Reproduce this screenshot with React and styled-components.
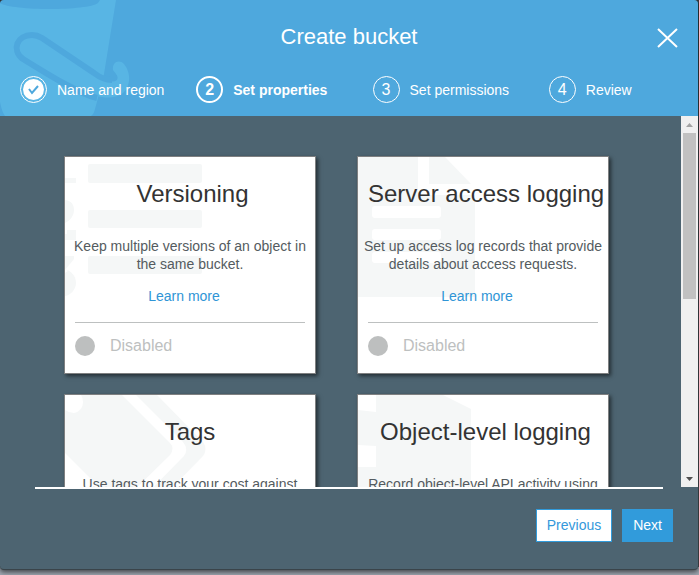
import React, { useRef, useState, useEffect } from "react";
import styled, { createGlobalStyle, css } from "styled-components";

const GlobalStyle = createGlobalStyle`
  * { box-sizing: border-box; }
  body {
    margin: 0;
    background: #9ea6b0;
    color: #333;
    font-family: "Liberation Sans", Arial, Helvetica, sans-serif;
    font-size: 14px;
    line-height: 18px;
  }
`;

const Backdrop = styled.div`
  height: 100vh;
  padding: 0 1px 5px 0;
  background: linear-gradient(#33393f, #4b4f53) no-repeat 0 0 / 100% calc(100% - 8px);
`;

const Dialog = styled.section`
  display: flex;
  flex-direction: column;
  height: 100%;
  overflow: hidden;
  border-radius: 4px;
  border-bottom: 1px solid #3a444a;
  background: #4d6471;
  box-shadow: 0 2px 5px rgba(0, 0, 0, 0.6);
`;

const Header = styled.header`
  position: relative;
  flex: none;
  display: flex;
  flex-direction: column;
  height: 116px;
  background: #4ea8dd;
  color: #fff;
`;

const BucketArt = styled.svg`
  position: absolute;
  left: 0;
  top: 0;
`;

const TitleBar = styled.div`
  position: relative;
  display: grid;
  grid-template-columns: 1fr auto 1fr;
  align-items: center;
  padding: 24px 20px 0 20px;
`;

const Title = styled.h1`
  grid-column: 2;
  margin: 0;
  font-size: 22px;
  line-height: 26px;
  font-weight: 400;
`;

const CloseButton = styled.button`
  justify-self: end;
  display: flex;
  padding: 0;
  border: 0;
  background: none;
  color: #fff;
  cursor: pointer;
`;

const Steps = styled.ol`
  position: relative;
  display: grid;
  grid-template-columns: repeat(3, minmax(0, 176fr)) minmax(0, 149fr);
  margin: 0;
  padding: 26px 0 0 20px;
  list-style: none;
`;

const Step = styled.li`
  display: flex;
  align-items: center;
  gap: 10px;
  white-space: nowrap;
  font-weight: ${(p) => (p.$current ? 700 : 400)};
`;

const StepBadge = styled.span`
  display: flex;
  align-items: center;
  justify-content: center;
  width: 27px;
  height: 27px;
  border: ${(p) => (p.$current ? 2 : 1)}px solid #fff;
  border-radius: 50%;
  font-size: 16px;
`;

const ScrollRow = styled.div`
  flex: 1;
  display: flex;
  min-height: 0;
`;

const ScrollArea = styled.div`
  flex: 1;
  min-width: 0;
  overflow-y: auto;
  scrollbar-width: none;
`;

const CardGrid = styled.div`
  display: grid;
  grid-template-columns: repeat(2, 252px);
  justify-content: center;
  gap: 20px 41px;
  padding: 40px 8px 40px 0;
`;

const Card = styled.article`
  position: relative;
  height: 218px;
  padding: 23px 5px 0;
  border: 1px solid #7f8081;
  background: #fff;
  box-shadow: 2px 2px 4px rgba(0, 0, 0, 0.55);
  text-align: center;
`;

const CardArt = styled.svg`
  position: absolute;
  left: 0;
  top: 0;
  fill: #f5f7f7;
`;

const CardBody = styled.div`
  position: relative;
`;

const CardTitle = styled.h2`
  margin: 0;
  padding-left: ${(p) => (p.$centered ? 0 : 5)}px;
  color: #333;
  font-size: 24px;
  line-height: 28px;
  font-weight: 400;
  white-space: nowrap;
`;

const CardText = styled.p`
  margin: 0;
  padding-top: 29px;
  color: #545b60;
`;

const LinkLine = styled.p`
  margin: 0;
  padding: 14px 12px 0 0;
`;

const CardLink = styled.a`
  color: #2f95d6;
  text-decoration: none;
`;

const Status = styled.div`
  display: flex;
  align-items: center;
  gap: 15px;
  margin: 17px 5px 0;
  padding-top: 13px;
  border-top: 1px solid #bdc0c0;
  color: #bdc0c0;
  font-size: 16px;
  line-height: 20px;
`;

const StatusDot = styled.span`
  width: 20px;
  height: 20px;
  border-radius: 50%;
  background: #bdbfbf;
`;

const Scrollbar = styled.div`
  flex: none;
  display: flex;
  flex-direction: column;
  width: 17px;
  background: #f0f0f0;
`;

const ArrowButton = styled.button`
  flex: none;
  display: flex;
  align-items: center;
  justify-content: center;
  height: 17px;
  padding: 0;
  border: 0;
  background: none;
  color: ${(p) => (p.$idle ? "#a3a3a3" : "#505050")};
`;

const Track = styled.div`
  flex: 1;
  padding: 0 2px;
`;

const Thumb = styled.div`
  height: 166px;
  background: #c1c1c1;
`;

const Footer = styled.footer`
  flex: none;
  display: flex;
  flex-direction: column;
  height: 82px;
  padding: 0 25px 0 35px;
`;

const Divider = styled.hr`
  align-self: stretch;
  height: 2px;
  margin: 0 10px 0 0;
  border: 0;
  background: #fff;
`;

const Actions = styled.div`
  display: flex;
  justify-content: flex-end;
  gap: 10px;
  padding-top: 20px;
`;

const ActionButton = styled.button`
  height: 33px;
  padding: 0 10px 2px;
  border: 1px solid #319bdb;
  background: #fff;
  color: #3498db;
  font: inherit;
  cursor: pointer;
  ${(p) =>
    p.$primary &&
    css`
      background: #319bdb;
      color: #fff;
    `}
`;

const VersioningArt = () => (
  <CardArt width="140" height="150" aria-hidden="true">
    <rect x="23" y="7" width="114" height="19" rx="2" />
    <rect x="23" y="53" width="114" height="18" rx="2" />
    <rect x="23" y="99" width="114" height="18" rx="2" />
    <path d="M0 21H11V26H0ZM0 43C7 44 9 48 9 53C9 58 6 63 0 66ZM0 77H2V73H11V83H0ZM0 99H9V102L0 113ZM0 116L3 114L0 112C8 115 11 120 11 126C11 132 6 138 0 139Z" />
  </CardArt>
);

const DocumentArt = () => (
  <CardArt width="140" height="150" aria-hidden="true">
    <path
      fillRule="evenodd"
      d="M0 0H60V38H117V140H0ZM17 49Q14 49 14 52V58Q14 61 17 61H80Q83 61 83 58V52Q83 49 80 49ZM17 72Q14 72 14 75V80Q14 83 17 83H80Q83 83 83 80V75Q83 72 80 72ZM17 95Q14 95 14 98V103Q14 106 17 106H80Q83 106 83 103V98Q83 95 80 95Z"
    />
    <path d="M71 0H87L113 27H71Z" />
  </CardArt>
);

const TagsArt = () => (
  <CardArt width="150" height="110" aria-hidden="true">
    <path d="M17 0H57L105 48Q110 53 105 60L57 107H49L0 58V15Q4 18 9 18Q18 16 18 7Q18 3 16 0Z" />
    <path d="M71 0H92L138 47Q143 54 138 61L93 107H74L119 61Q124 54 118 47Z" />
  </CardArt>
);

const ObjectArt = () => (
  <CardArt width="140" height="110" aria-hidden="true">
    <path d="M18 0H85L113 14V108H0V72H18V51L0 50V15L18 17Z" />
  </CardArt>
);

const steps = [
  { label: "Name and region", done: true },
  { label: "Set properties", current: true },
  { label: "Set permissions" },
  { label: "Review" },
];

const cards = [
  { title: "Versioning", text: "Keep multiple versions of an object in the same bucket.", Art: VersioningArt },
  { title: "Server access logging", text: "Set up access log records that provide details about access requests.", Art: DocumentArt },
  { title: "Tags", text: "Use tags to track your cost against projects or other criteria.", Art: TagsArt, centered: true },
  { title: "Object-level logging", text: "Record object-level API activity using CloudTrail data events.", Art: ObjectArt },
];

export default function App() {
  const area = useRef(null);
  const [offset, setOffset] = useState(0);

  const syncThumb = () => {
    const el = area.current;
    const range = el.scrollHeight - el.clientHeight;
    const travel = el.clientHeight - 34 - 166;
    setOffset(range > 0 ? Math.round((el.scrollTop / range) * travel) : 0);
  };

  useEffect(syncThumb, []);

  const scrollBy = (amount) => {
    area.current.scrollTop += amount;
  };

  return (
    <>
      <GlobalStyle />
      <Backdrop>
        <Dialog role="dialog" aria-labelledby="dialog-title">
          <Header>
            <BucketArt width="135" height="116" aria-hidden="true">
              <path fill="#58b5e4" d="M0 3C12 11 88 11 98 3L100 0H116L104 74L98 98L95 109Q94 114 91 116H5Q2 112 0 102Z" />
              <path fill="#58b5e4" d="M90 78L104 78Q112 84 117 80C119 76 115 73 113 70C112 62 119 59 124 64C132 74 130 87 123 93C115 99 105 98 96 96Z" />
              <path fill="none" stroke="#4ea8dd" strokeWidth="6" d="M97 98C80 94 52 77 23 59C11 50 17 35 32 35Q37 35 42 38L94 73Q103 80 112 80" />
            </BucketArt>
            <TitleBar>
              <Title id="dialog-title">Create bucket</Title>
              <CloseButton aria-label="Close">
                <svg width="21" height="21" viewBox="0 0 21 21" fill="none" stroke="currentColor" strokeWidth="2">
                  <path d="M1 2L20 20M20 2L1 20" />
                </svg>
              </CloseButton>
            </TitleBar>
            <Steps>
              {steps.map((step, i) => (
                <Step key={step.label} $current={step.current} aria-current={step.current ? "step" : undefined}>
                  <StepBadge $current={step.current}>
                    {step.done ? (
                      <svg width="21" height="21" viewBox="0 0 21 21" aria-label="Done">
                        <circle cx="10.5" cy="10.5" r="10.5" fill="#fff" />
                        <path d="M6 10L9 14L15 7" fill="none" stroke="#4ea8dd" strokeWidth="2" />
                      </svg>
                    ) : (
                      i + 1
                    )}
                  </StepBadge>
                  {step.label}
                </Step>
              ))}
            </Steps>
          </Header>
          <ScrollRow>
            <ScrollArea ref={area} onScroll={syncThumb}>
              <CardGrid>
                {cards.map(({ title, text, Art, centered }) => (
                  <Card key={title}>
                    <Art />
                    <CardBody>
                      <CardTitle $centered={centered}>{title}</CardTitle>
                      <CardText>{text}</CardText>
                      <LinkLine>
                        <CardLink href="#">Learn more</CardLink>
                      </LinkLine>
                      <Status>
                        <StatusDot />
                        Disabled
                      </Status>
                    </CardBody>
                  </Card>
                ))}
              </CardGrid>
            </ScrollArea>
            <Scrollbar>
              <ArrowButton $idle={offset === 0} aria-label="Scroll up" onClick={() => scrollBy(-40)}>
                <svg width="7" height="4" fill="currentColor"><path d="M0 4L3.5 0L7 4Z" /></svg>
              </ArrowButton>
              <Track>
                <Thumb style={{ transform: `translateY(${offset}px)` }} />
              </Track>
              <ArrowButton aria-label="Scroll down" onClick={() => scrollBy(40)}>
                <svg width="7" height="4" fill="currentColor"><path d="M0 0L3.5 4L7 0Z" /></svg>
              </ArrowButton>
            </Scrollbar>
          </ScrollRow>
          <Footer>
            <Divider />
            <Actions>
              <ActionButton>Previous</ActionButton>
              <ActionButton $primary>Next</ActionButton>
            </Actions>
          </Footer>
        </Dialog>
      </Backdrop>
    </>
  );
}
